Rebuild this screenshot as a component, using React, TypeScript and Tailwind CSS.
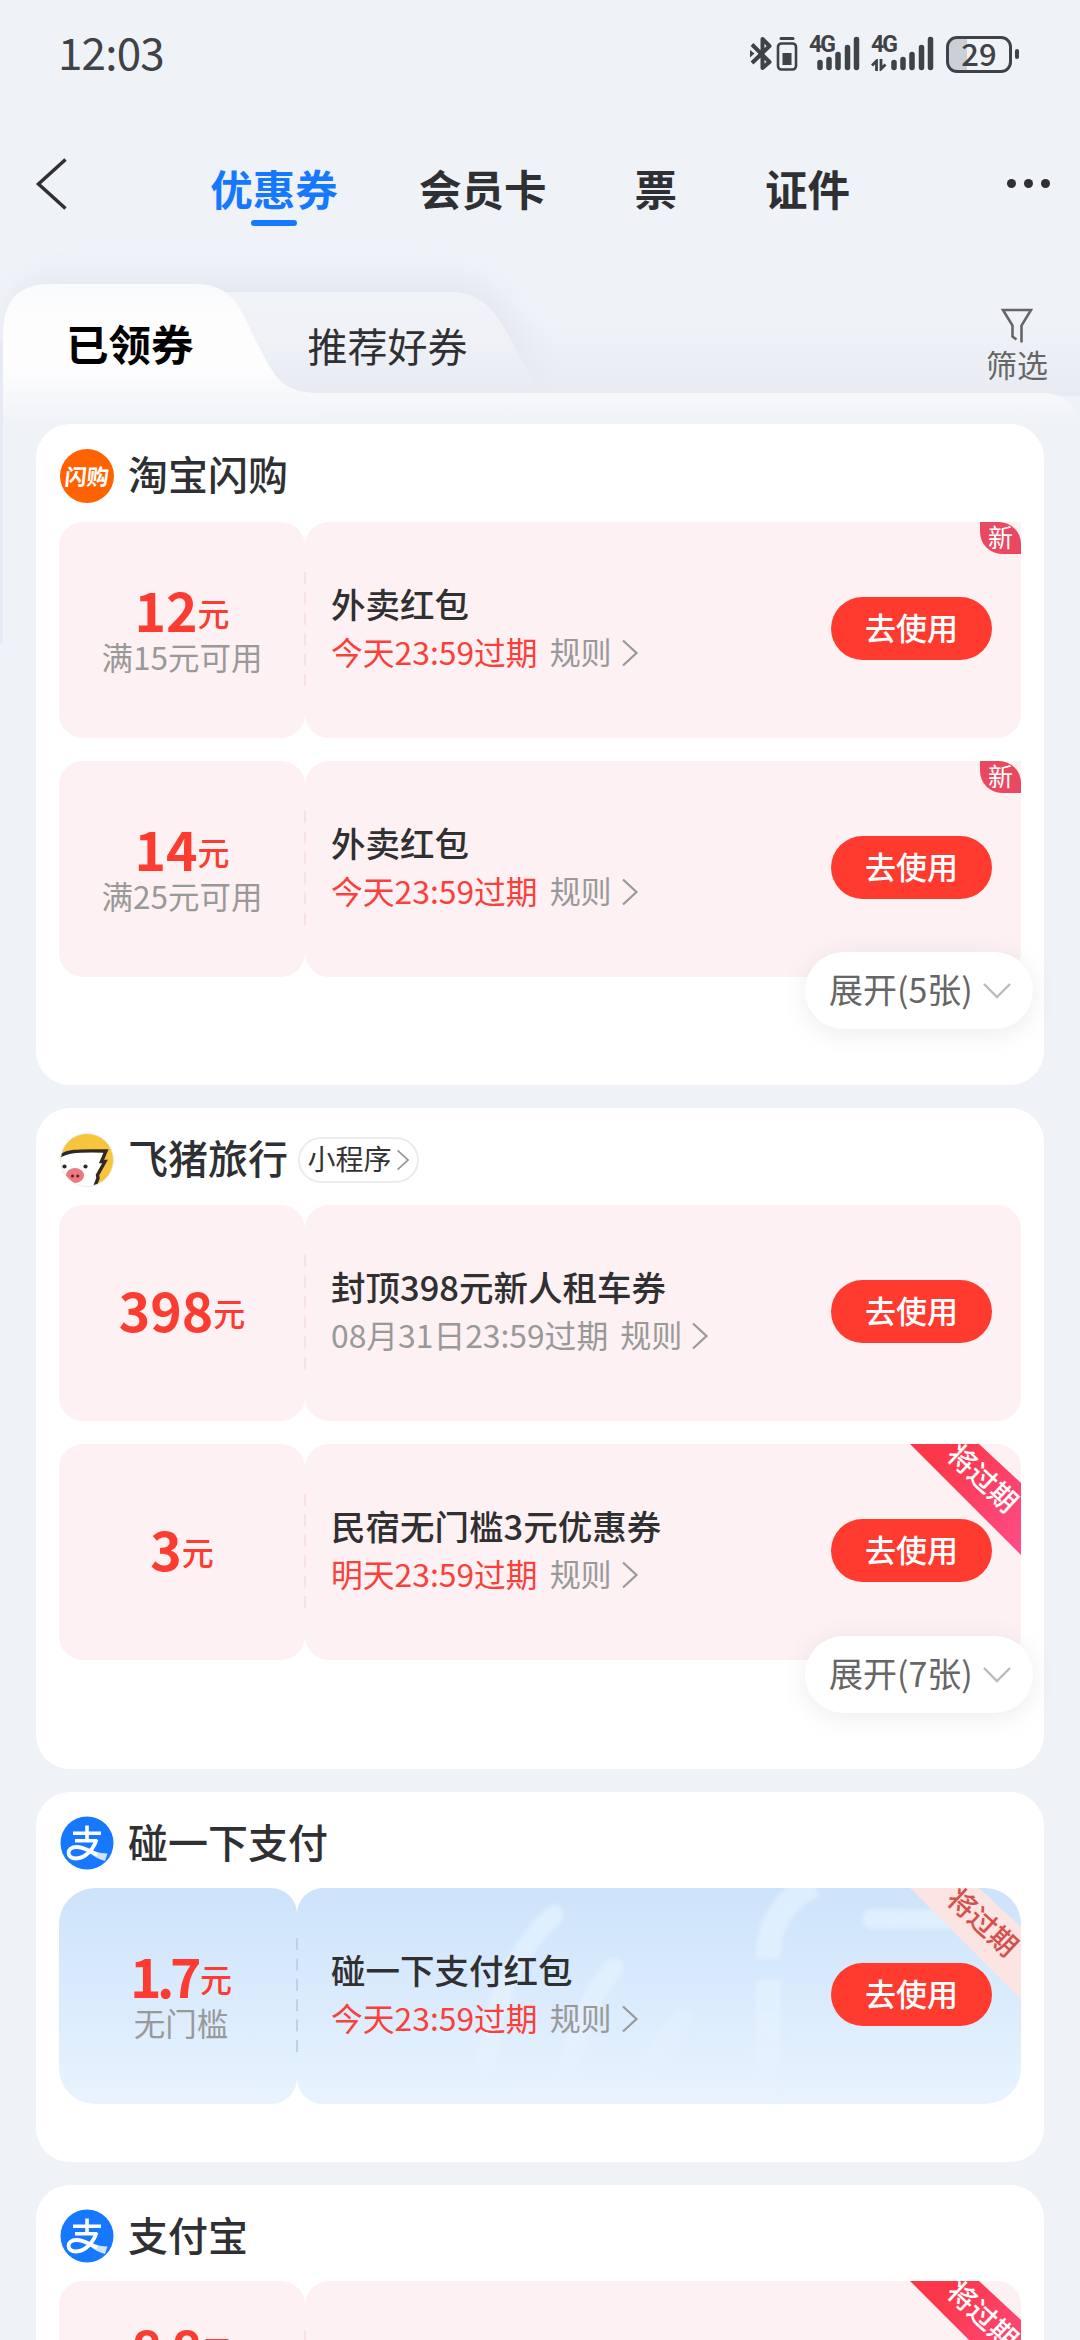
import React from 'react';
import clsx from 'clsx';

type Coupon = {
	amount: string;
	limit?: string;
	title: string;
	expire: string;
	urgent?: boolean;
	badge?: 'new' | 'soon';
};

type Shop = {
	name: string;
	logo: React.ReactNode;
	miniApp?: boolean;
	blue?: boolean;
	more?: string;
	coupons: Coupon[];
	headClass: string;
	footClass: string;
};

const Chevron = ({ className }: { className: string }) => (
	<svg viewBox="0 0 18 28" fill="none" stroke="currentColor" strokeWidth="2.2" className={className}>
		<path d="M2 1.5 15.5 14 2 26.5"/>
	</svg>
);

const FlashLogo = () => (
	<div className="flex size-[54px] items-center justify-center rounded-full bg-[#ff6200]">
		<span className="-skew-x-6 pb-[2px] text-[22px] font-bold leading-none text-white">闪购</span>
	</div>
);

const PigLogo = () => (
	<svg viewBox="0 0 54 54" className="size-[54px]">
		<clipPath id="pig"><circle cx="27" cy="27" r="26.5"/></clipPath>
		<g clipPath="url(#pig)">
			<rect width="54" height="54" fill="#f8c43c"/>
			<path d="M-4 26C6 17 18 17.500 46 18L41.500 28.500H45L37.500 42 38 45 33.500 57H-4Z" fill="#fff" stroke="#2f2a25" strokeWidth="3.400"/>
			<circle cx="4.500" cy="33.500" r="2.100" fill="#2f2a25"/>
			<circle cx="25.500" cy="33.500" r="2.100" fill="#2f2a25"/>
			<ellipse cx="15" cy="42.500" rx="9" ry="7.500" fill="#e87a80"/>
			<circle cx="12.500" cy="43" r="1.600" fill="#6b1d22"/>
			<circle cx="17.800" cy="43" r="1.600" fill="#6b1d22"/>
		</g>
		<circle cx="27" cy="27" r="26.500" fill="none" stroke="#ececec" strokeWidth="1"/>
	</svg>
);

const AlipayLogo = () => (
	<svg viewBox="0 0 54 54" className="size-[54px]">
		<circle cx="27" cy="27" r="26.500" fill="#1677ff"/>
		<path d="M13 17.200H41M27 9.500V24.500M15 24.800H37" fill="none" stroke="#fff" strokeWidth="3.600"/>
		<path d="M36.500 23.500C34 32 26 42.500 16 42.500C6 42.500 6 31 16.500 31C25 31 31 36.500 37 38.500" fill="none" stroke="#fff" strokeWidth="3.800"/>
		<path d="M31 33.500C37 36.500 43 37.500 47.500 37.500L45 45C39 43.500 34 40.500 29 36.500Z" fill="#fff" fillOpacity=".8"/>
	</svg>
);

const Signal = ({ data }: { data?: boolean }) => (
	<div className={clsx('relative h-[36px]', data ? 'w-[63px]' : 'w-[51px]')}>
		<span className="absolute -top-px left-0 font-[Roboto] text-[23px] font-bold leading-[20px] tracking-[-2px]">4G</span>
		<svg viewBox="0 0 44 36" className="absolute right-0 top-0 h-[36px] w-[44px]" stroke="currentColor" strokeWidth="5.500" strokeLinecap="round">
			<path d="M4 26.500V31.500M13 23.500V31.500M22 18.500V31.500M31.500 11.500V31.500M40.500 3.500V31.500"/>
		</svg>
		{data && (
			<svg viewBox="0 0 16 12" className="absolute left-0 top-[23px] h-[12px] w-[16px]" fill="none" stroke="currentColor" strokeWidth="2.800">
				<path d="M5.500 12V2L1 6.500M10 0V10L14.500 5.500"/>
			</svg>
		)}
	</div>
);

const StatusBar = () => (
	<div className="flex h-[108px] items-center justify-between pl-[58px] pr-[61px] text-[#3f4246]">
		<span className="pb-[6px] text-[44px] font-normal leading-none tracking-[-0.8px]">12:03</span>
		<div className="flex items-center">
			<svg viewBox="0 0 48 36" className="mr-[11px] h-[36px] w-[48px]" fill="none" stroke="currentColor">
				<path d="M2 8.500 19.500 26 12.500 32V3L19.500 10 2 27" strokeWidth="4" strokeLinejoin="round"/>
				<path d="M0 14 4.500 17.500 0 21.500Z" fill="currentColor" stroke="none"/>
				<rect x="28" y="7.500" width="18" height="26" rx="3.500" strokeWidth="2.600"/>
				<path d="M31 2.500H43" strokeWidth="3" strokeLinecap="round"/>
				<rect x="32.500" y="17" width="9" height="12" fill="currentColor" stroke="none"/>
			</svg>
			<Signal/>
			<div className="w-[11px]"/>
			<Signal data/>
			<div className="ml-[12px] flex h-[37px] w-[66px] items-center justify-center rounded-[11px] border-[3px] border-current bg-linear-to-r from-[#cccfd5] from-30% to-transparent to-30%">
				<span className="pb-[3px] text-[31px] font-medium leading-none">29</span>
			</div>
			<div className="ml-[3px] h-[10px] w-[4px] rounded-full bg-current"/>
		</div>
	</div>
);

const NavBar = () => (
	<div className="flex h-[142px] items-start text-[42.5px] font-bold leading-[60px] text-[#2f3033]">
		<svg viewBox="0 0 32 52" className="ml-[35px] mt-[50px] h-[52px] w-[32px]" fill="none" stroke="currentColor" strokeWidth="3.500">
			<path d="M30.500 1.500 3.500 26 30.500 50.500"/>
		</svg>
		<div className="ml-[143px] mt-[50px] flex w-[128px] flex-col items-center text-[#1677ff]">
			<span className="h-[62px]">优惠券</span>
			<div className="h-[6px] w-[46px] rounded-[3px] bg-[#1677ff]"/>
		</div>
		<span className="ml-[81px] mt-[50px]">会员卡</span>
		<span className="ml-[88px] mt-[50px]">票</span>
		<span className="ml-[88px] mt-[50px]">证件</span>
		<div className="ml-[157px] mt-[71px] flex gap-[8px]">
			<div className="size-[9px] rounded-full bg-current"/>
			<div className="size-[9px] rounded-full bg-current"/>
			<div className="size-[9px] rounded-full bg-current"/>
		</div>
	</div>
);

// folder shaped tabs, the body of the folder fades out behind the first card
const SubTabs = () => (
	<div className="relative h-[174px]">
		<svg viewBox="0 250 1080 400" className="absolute left-0 top-0 h-[400px] w-[1080px] overflow-visible" fill="none">
			<defs>
				<linearGradient id="front" gradientUnits="userSpaceOnUse" x1="0" y1="284" x2="0" y2="426">
					<stop offset="0" stopColor="#f9fafc"/>
					<stop offset=".25" stopColor="#fdfdfe"/>
					<stop offset=".6" stopColor="#fdfdfe"/>
					<stop offset="1" stopColor="#eff2f7"/>
				</linearGradient>
				<linearGradient id="back" gradientUnits="userSpaceOnUse" x1="0" y1="292" x2="0" y2="396">
					<stop offset="0" stopColor="#f0f3f7"/>
					<stop offset=".5" stopColor="#eff1f7"/>
					<stop offset="1" stopColor="#e7eaf2"/>
				</linearGradient>
				<linearGradient id="shelf" gradientUnits="userSpaceOnUse" x1="0" y1="320" x2="0" y2="396">
					<stop offset="0" stopColor="#e9ebf3" stopOpacity="0"/>
					<stop offset="1" stopColor="#e9ebf3"/>
				</linearGradient>
				<linearGradient id="body" gradientUnits="userSpaceOnUse" x1="0" y1="393" x2="0" y2="424">
					<stop offset="0" stopColor="#f7f8fa"/>
					<stop offset="1" stopColor="#eff2f7"/>
				</linearGradient>
				<filter id="glow" x="-20%" y="-40%" width="140%" height="180%">
					<feGaussianBlur stdDeviation="14"/>
				</filter>
			</defs>
			<path d="M40 278H450C505 278 520 335 556 396H10V300Z" fill="#dfe3ee" fillOpacity=".75" filter="url(#glow)"/>
			<path d="M500 320H1080V396H500Z" fill="url(#shelf)"/>
			<path d="M220 292H450C485 292 498 315 511 340L541 396H220Z" fill="url(#back)"/>
			<path d="M300 393H1045Q1076 396 1080 424H300Z" fill="url(#body)"/>
			<path d="M3 650V334Q3 284 50 284H195C235 284 240 310 258 345C275 378 282 393 320 393V424H3Z" fill="url(#front)"/>
			<path d="M0 424H1080V650H0Z" fill="#eff2f7"/>
			<path d="M1.500 340V644" stroke="#e6eaf4" strokeWidth="3"/>
		</svg>
		<div className="relative flex items-start">
			<span className="ml-[66px] mt-[63px] text-[42.5px] font-bold leading-[60px] text-black">已领券</span>
			<span className="ml-[114px] mt-[65px] text-[40px] leading-[60px] text-[#2f3033]">推荐好券</span>
			<div className="ml-auto mr-[32px] mt-[58px] flex flex-col items-center text-[#666]">
				<svg viewBox="0 0 32 35" className="h-[35px] w-[32px]" fill="none" stroke="currentColor" strokeWidth="2.600">
					<path d="M20.500 34.500V17.500L30 2H2L11.500 17.500V28.500L15.500 31.500"/>
				</svg>
				<span className="mt-px text-[31px] leading-[40px]">筛选</span>
			</div>
		</div>
	</div>
);

const Ribbon = ({ pale }: { pale?: boolean }) => (
	<div className="absolute right-0 top-0 h-[111px] w-[111px]">
		<svg viewBox="0 0 111 111" className="h-full w-full">
			<defs>
				<linearGradient id="ribbon" x1="0" y1="0" x2="1" y2="1">
					<stop offset=".2" stopColor="#fb3849"/>
					<stop offset="1" stopColor="#ff4d8a"/>
				</linearGradient>
			</defs>
			<path d="M0 0H69L111 39V111Z" fill={pale ? '#fbe4e1' : 'url(#ribbon)'}/>
		</svg>
		<span className={clsx('absolute left-[31px] top-[15px] flex h-[36px] w-[86px] rotate-[43deg] items-center justify-center whitespace-nowrap text-[28px] font-medium leading-none', pale ? 'text-[#d4504c]' : 'text-white')}>将过期</span>
	</div>
);

// light strokes on the blue coupon
const Waves = () => (
	<svg viewBox="297 1888 724 216" className="absolute inset-0 h-full w-full" fill="none" strokeLinecap="round">
		<defs>
			<linearGradient id="wave" gradientUnits="userSpaceOnUse" x1="0" y1="1888" x2="0" y2="2100">
				<stop offset="0" stopColor="#e2f2ff"/>
				<stop offset=".7" stopColor="#e6f2fe"/>
				<stop offset="1" stopColor="#e9f4fe" stopOpacity="0"/>
			</linearGradient>
			<filter id="soft"><feGaussianBlur stdDeviation="2"/></filter>
		</defs>
		<g stroke="url(#wave)" strokeWidth="20" filter="url(#soft)" opacity=".75">
			<path d="M554 1915Q494 1970 486 2070"/>
			<path d="M614 1968Q570 2020 566 2100"/>
			<path d="M684 2018Q650 2050 646 2100" strokeOpacity=".6"/>
			<path d="M768 1958C768 1920 790 1895 815 1885M768.5 1980 768 2100" strokeWidth="25" strokeLinecap="butt"/>
			<path d="M872 1919 990 1919.5"/>
		</g>
	</svg>
);

const CouponRow = ({ coupon, blue }: { coupon: Coupon; blue?: boolean }) => (
	<div className="relative flex h-[216px]">
		<div className={clsx('flex flex-col items-center justify-center', coupon.limit ? 'pb-px' : 'pb-[8px]', blue ? 'w-[238px] rounded-[26px] rounded-l-[36px] bg-linear-to-b from-[#cde3fb] to-[#e8f3fe] pl-[6px]' : 'w-[246px] rounded-[24px] bg-[#fef1f3]')}>
			<div className="flex items-end justify-center text-[#fc3b31]">
				<span className={clsx('text-[53.5px] font-bold leading-[52px]', coupon.amount.includes('.') && 'mr-[3px] tracking-[-4.5px]')}>{coupon.amount}</span>
				<span className="text-[32px] font-medium leading-[46px]">元</span>
			</div>
			{coupon.limit && (
				<span className="w-[220px] text-center text-[31.5px] leading-[42px] text-[#999]">{coupon.limit}</span>
			)}
		</div>
		<div className={clsx('relative flex flex-1 items-center overflow-hidden', blue ? 'rounded-[26px] rounded-r-[36px] bg-linear-to-b from-[#cde3fb] to-[#e8f3fe] pl-[34px]' : 'rounded-[24px] bg-[#fef1f3] pl-[26px]', coupon.badge === 'new' && 'rounded-tr-none')}>
			{blue && <Waves/>}
			<div className="relative flex flex-col pb-[6px]">
				<span className="text-[34.5px] font-medium leading-[48px] text-[#302f31]">{coupon.title}</span>
				<div className="flex items-center text-[31px] leading-[48px] text-[#999]">
					<span className={clsx('text-[31.8px]', coupon.urgent && 'text-[#f9403a]')}>{coupon.expire}</span>
					<span className="ml-[12px]">规则</span>
					<Chevron className="ml-[9px] mt-[3px] h-[28px] w-[18px]"/>
				</div>
			</div>
			<button className="relative -mt-[3px] ml-auto mr-[29px] h-[63px] w-[161px] rounded-full bg-[#ff3b30] pb-[4px] text-[31px] font-medium leading-[58px] text-white">去使用</button>
			{coupon.badge === 'new' && (
				<div className="absolute right-0 top-0 flex h-[32px] w-[41px] justify-center rounded-bl-[22px] rounded-tr-[22px] bg-[#ea4861] text-[25px] leading-[28px] text-white">新</div>
			)}
			{coupon.badge === 'soon' && <Ribbon pale={blue}/>}
		</div>
		<svg viewBox="0 0 2 116" className={clsx('absolute top-[50px] h-[116px] w-[2px]', blue ? 'left-[237px]' : 'left-[245px]')}>
			<path d="M1 0V116" stroke={blue ? '#bdd2ea' : '#f8e0e3'} strokeWidth="2" strokeDasharray="12 8.400"/>
		</svg>
	</div>
);

const ShopCard = ({ shop }: { shop: Shop }) => (
	<div className={clsx('relative mx-[36px] rounded-[34px] bg-white pl-[23px] pr-[23px]', shop.footClass)}>
		<div className={clsx('flex items-center pl-px', shop.headClass)}>
			{shop.logo}
			<span className="ml-[14px] pb-[5px] text-[40px] font-medium leading-[54px] text-[#2f3033]">{shop.name}</span>
			{shop.miniApp && (
				<div className="ml-[10px] flex h-[46px] w-[121px] items-center justify-center rounded-full border-[2.500px] border-[#ececec] text-[28px] leading-none text-[#333]">
					<span className="pb-[4px]">小程序</span>
					<Chevron className="ml-[4px] h-[24px] w-[14px] text-[#999]"/>
				</div>
			)}
		</div>
		<div className="flex flex-col gap-[23px]">
			{shop.coupons.map((c, i) => <CouponRow key={i} coupon={c} blue={shop.blue}/>)}
		</div>
		{shop.more && (
			<div className="absolute bottom-[56px] right-[11px] flex h-[77px] w-[228px] items-center rounded-full bg-white pl-[24px] text-[34px] text-[#666] shadow-[0_4px_28px_rgba(0,0,0,0.08)]">
				<span className="pb-[4px] leading-none">{shop.more}</span>
				<svg viewBox="0 0 28 16" className="ml-auto mr-[22px] h-[16px] w-[28px]" fill="none" stroke="#bbb" strokeWidth="2.400">
					<path d="M1 1 14 14 27 1"/>
				</svg>
			</div>
		)}
	</div>
);

const shops: Shop[] = [
	{
		name: '淘宝闪购',
		logo: <FlashLogo/>,
		more: '展开(5张)',
		headClass: 'h-[98px] pt-[5px]',
		footClass: 'pb-[108px]',
		coupons: [
			{ amount: '12', limit: '满15元可用', title: '外卖红包', expire: '今天23:59过期', urgent: true, badge: 'new' },
			{ amount: '14', limit: '满25元可用', title: '外卖红包', expire: '今天23:59过期', urgent: true, badge: 'new' },
		],
	},
	{
		name: '飞猪旅行',
		logo: <PigLogo/>,
		miniApp: true,
		more: '展开(7张)',
		headClass: 'h-[97px] pt-[6px]',
		footClass: 'pb-[109px]',
		coupons: [
			{ amount: '398', title: '封顶398元新人租车券', expire: '08月31日23:59过期' },
			{ amount: '3', title: '民宿无门槛3元优惠券', expire: '明天23:59过期', urgent: true, badge: 'soon' },
		],
	},
	{
		name: '碰一下支付',
		logo: <AlipayLogo/>,
		blue: true,
		headClass: 'h-[96px] pt-[6px]',
		footClass: 'pb-[58px]',
		coupons: [
			{ amount: '1.7', limit: '无门槛', title: '碰一下支付红包', expire: '今天23:59过期', urgent: true, badge: 'soon' },
		],
	},
	{
		name: '支付宝',
		logo: <AlipayLogo/>,
		headClass: 'h-[96px] pt-[6px]',
		footClass: 'pb-[59px]',
		coupons: [
			{ amount: '8.8', limit: '满8.81元可用指定商品', title: '支付宝红包', expire: '明天23:59过期', urgent: true, badge: 'soon' },
		],
	},
];

export default function App() {
	return (
		<div className="h-[2340px] w-[1080px] overflow-hidden bg-[#eff2f7] font-['Noto_Sans_CJK_SC',sans-serif]">
			<StatusBar/>
			<NavBar/>
			<SubTabs/>
			<div className="relative flex flex-col gap-[23px]">
				{shops.map((s) => <ShopCard key={s.name} shop={s}/>)}
			</div>
		</div>
	);
}
